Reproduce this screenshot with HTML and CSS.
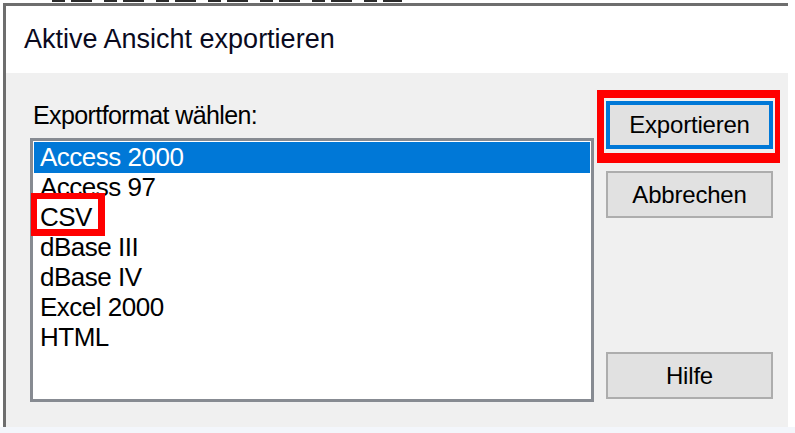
FILE: index.html
```html
<!DOCTYPE html>
<html lang="de">
<head>
<meta charset="utf-8">
<title>Aktive Ansicht exportieren</title>
<link rel="stylesheet" href="styles.css">
</head>
<body>
<div class="prev-line"><div class="prev-marks"></div></div>
<div class="dialog">
  <div class="titlebar">Aktive Ansicht exportieren</div>
  <div class="content">
    <div class="left">
      <div class="label">Exportformat wählen:</div>
      <div class="list">
        <div class="item selected">Access 2000</div>
        <div class="item">Access 97</div>
        <div class="item">CSV<span class="mark-box"></span></div>
        <div class="item">dBase III</div>
        <div class="item">dBase IV</div>
        <div class="item">Excel 2000</div>
        <div class="item">HTML</div>
      </div>
    </div>
    <div class="right">
      <div class="mark-frame"><button class="btn btn-default">Exportieren</button></div>
      <button class="btn btn-cancel">Abbrechen</button>
      <button class="btn btn-help">Hilfe</button>
    </div>
  </div>
</div>
<div class="bottom-strip"></div>
</body>
</html>
```
FILE: styles.css
```css
html, body {
  margin: 0;
  padding: 0;
  background: #ffffff;
}
body {
  width: 795px;
  height: 433px;
  overflow: hidden;
  font-family: "Liberation Sans", Arial, sans-serif;
  color: #000;
}
.prev-line {
  height: 3px;
  overflow: hidden;
  padding-left: 52px;
}
.prev-marks {
  width: 350px;
  height: 2px;
  background: repeating-linear-gradient(90deg, #2a2a2a 0 13px, transparent 13px 19px, #2a2a2a 19px 40px, transparent 40px 52px);
}
.dialog {
  margin-left: 3px;
  width: 782px;
  border-top: 3px solid #6e6e6e;
  border-left: 3px solid #6e6e6e;
}
.titlebar {
  height: 67px;
  box-sizing: border-box;
  padding: 17px 0 0 18px;
  background: #ffffff;
  font-size: 27px;
  line-height: 32px;
  color: #0a0a1e;
}
.content {
  height: 354px;
  background: #f0f0f0;
  display: flex;
}
.left {
  margin-left: 24px;
  width: 564px;
  display: flex;
  flex-direction: column;
}
.label {
  margin-top: 28px;
  padding-left: 3px;
  font-size: 25px;
  line-height: 28px;
  letter-spacing: -0.6px;
  height: 28px;
}
.list {
  margin-top: 9px;
  height: 264px;
  box-sizing: border-box;
  border: 3px solid #878b92;
  background: #ffffff;
  padding: 1px;
}
.item {
  position: relative;
  height: 30px;
  line-height: 30px;
  padding-left: 6px;
  font-size: 26px;
  letter-spacing: -0.5px;
  white-space: nowrap;
}
.item.selected {
  background: #0078d7;
  color: #ffffff;
  height: 31px;
  margin-bottom: -1px;
}
.mark-box {
  position: absolute;
  left: -3px;
  top: -9px;
  width: 74px;
  height: 43px;
  box-sizing: border-box;
  border: 6px solid #ff0000;
  border-right-width: 7px;
  border-bottom-width: 7px;
  z-index: 2;
}
.right {
  margin-left: 3px;
  padding-top: 17px;
  display: flex;
  flex-direction: column;
  align-items: flex-start;
}
.mark-frame {
  border-style: solid;
  border-color: #ff0000;
  border-width: 8px 5px 10px 7px;
  padding: 3px 2px 4px 2px;
}
.btn {
  width: 167px;
  box-sizing: border-box;
  background: #e1e1e1;
  font-family: "Liberation Sans", Arial, sans-serif;
  font-size: 24px;
  letter-spacing: -0.2px;
  color: #000;
  padding: 0;
  margin: 0;
  display: flex;
  align-items: center;
  justify-content: center;
}
.btn-default {
  height: 48px;
  border: 4px solid #0078d7;
}
.btn-cancel {
  height: 47px;
  border: 2px solid #adadad;
  margin-left: 9px;
  margin-top: 8px;
}
.btn-help {
  height: 47px;
  border: 2px solid #adadad;
  margin-left: 9px;
  margin-top: 134px;
}
.bottom-strip {
  height: 6px;
  background: #f3f6fb;
}
```
